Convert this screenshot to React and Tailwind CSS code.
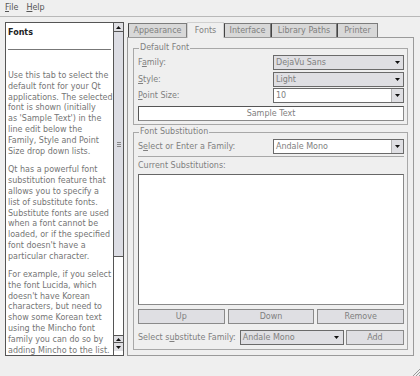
import React from 'react';

const para1 = [
  'Use this tab to select the',
  'default font for your Qt',
  'applications. The selected',
  'font is shown (initially',
  "as 'Sample Text') in the",
  'line edit below the',
  'Family, Style and Point',
  'Size drop down lists.',
];
const para2 = [
  'Qt has a powerful font',
  'substitution feature that',
  'allows you to specify a',
  'list of substitute fonts.',
  'Substitute fonts are used',
  'when a font cannot be',
  'loaded, or if the specified',
  "font doesn't have a",
  'particular character.',
];
const para3 = [
  'For example, if you select',
  'the font Lucida, which',
  "doesn't have Korean",
  'characters, but need to',
  'show some Korean text',
  'using the Mincho font',
  'family you can do so by',
  'adding Mincho to the list.',
];

function Para({ lines, className }) {
  return (
    <div className={className}>
      {lines.map((l, i) => (
        <div key={i} className="leading-[10.8px] whitespace-nowrap">{l}</div>
      ))}
    </div>
  );
}

function Arrow() {
  return (
    <svg width="5" height="3" viewBox="0 0 5 3" className="block">
      <path d="M0 0h5L2.5 3z" fill="#111" />
    </svg>
  );
}

function UpArrow() {
  return (
    <svg width="5" height="3" viewBox="0 0 5 3" className="block">
      <path d="M0 3h5L2.5 0z" fill="#111" />
    </svg>
  );
}

function Combo({ value, editable, className = '' }) {
  return (
    <div
      className={`h-[15px] flex items-center border border-[#6a6a6a] ${
        editable ? 'bg-white' : 'bg-[#dfdfe3]'
      } ${className}`}
    >
      <span className="flex-1 pl-[2px] leading-[13px] text-[#808080] truncate">{value}</span>
      <span
        className={`w-[12px] h-full flex items-center justify-center ${
          editable ? 'bg-[#dfdfe3] border-l border-[#b0b0b0]' : ''
        }`}
      >
        <Arrow />
      </span>
    </div>
  );
}

function Button({ children, className = '' }) {
  return (
    <div
      className={`h-[15px] flex items-center justify-center border border-[#8a8a8a] bg-[#dfdfe3] text-[#808080] leading-[13px] ${className}`}
    >
      {children}
    </div>
  );
}

function Tab({ label, w, selected }) {
  if (selected) {
    return (
      <div
        className={`${w} h-[16px] -mb-px relative z-10 flex items-center justify-center bg-[#efefef] border-t border-x border-[#d0d0d0] text-[#808080]`}
      >
        {label}
      </div>
    );
  }
  return (
    <div
      className={`${w} h-[14px] flex items-center justify-center bg-[#d8d8d8] border-t border-x border-[#7c7c7c] border-l-[#444] text-[#808080]`}
    >
      {label}
    </div>
  );
}

export default function App() {
  return (
    <div className="w-[420px] h-[376px] bg-[#efefef] flex flex-col overflow-hidden font-['DejaVu_Sans',sans-serif] text-[8px] text-[#757575] relative">
      {/* menu bar */}
      <div className="h-[17px] flex items-center gap-[8px] px-[5px] border-b border-[#b8b8b8] text-[#555] shrink-0">
        <span><u>F</u>ile</span>
        <span><u>H</u>elp</span>
      </div>

      <div className="flex pt-[5px] pl-[5px]">
        {/* left help text */}
        <div className="w-[119px] h-[334px] flex border border-[#555] bg-white">
          <div className="flex-1 pl-[2px] pt-[4px] overflow-hidden">
            <div className="font-bold text-[#222] leading-[11px]">Fonts</div>
            <div className="mt-[11px] mr-[2px] h-px bg-[#777]" />
            <Para lines={para1} className="mt-[21px]" />
            <Para lines={para2} className="mt-[8px]" />
            <Para lines={para3} className="mt-[7.5px]" />
          </div>
          <div className="w-[10px] flex flex-col border-l border-[#555]">
            <div className="h-[9px] flex items-center justify-center bg-[#dfdfe3] border-b border-[#555]">
              <UpArrow />
            </div>
            <div className="h-[225px] bg-[#dcdde4] border-b border-[#555] flex items-center justify-center">
              <div className="flex flex-col gap-[1px]">
                <div className="w-[4px] h-px bg-[#888]" />
                <div className="w-[4px] h-px bg-[#888]" />
                <div className="w-[4px] h-px bg-[#888]" />
              </div>
            </div>
            <div className="flex-1 bg-white" />
            <div className="h-[8px] flex items-center justify-center bg-[#dfdfe3] border-y border-[#555]">
              <UpArrow />
            </div>
            <div className="h-[8px] flex items-center justify-center bg-[#dfdfe3]">
              <Arrow />
            </div>
            <div className="h-[4px] bg-white" />
          </div>
        </div>

        {/* tab widget */}
        <div className="ml-[3px] w-[287px] flex flex-col">
          <div className="h-[15px] flex items-end pl-[1px]">
            <Tab label="Appearance" w="w-[59px]" />
            <Tab label="Fonts" w="w-[37px]" selected />
            <Tab label="Interface" w="w-[47px]" />
            <Tab label="Library Paths" w="w-[66px]" />
            <Tab label="Printer" w="w-[41px]" />
          </div>
          <div className="h-[319px] border border-[#9a9a9a] flex flex-col px-[5px] pt-[5px] pb-[5px] text-[#808080]">
            <fieldset className="border border-[#a8a8a8] px-[4px] pr-[3px] pb-[3px]">
              <legend className="px-[1px] ml-[1px] leading-[10px]">Default Font</legend>
              <div className="mt-[2px] flex items-center justify-between">
                <span>F<u>a</u>mily:</span>
                <Combo value="DejaVu Sans" className="w-[131px]" />
              </div>
              <div className="mt-[2px] flex items-center justify-between">
                <span><u>S</u>tyle:</span>
                <Combo value="Light" className="w-[131px]" />
              </div>
              <div className="mt-[1px] flex items-center justify-between">
                <span><u>P</u>oint Size:</span>
                <Combo value="10" editable className="w-[131px]" />
              </div>
              <div className="mt-[3px] h-[15px] border border-[#8a8a8a] border-t-[#555] border-l-[#555] bg-white flex items-center justify-center">
                Sample Text
              </div>
            </fieldset>

            <fieldset className="mt-[2px] h-[223px] border border-[#a8a8a8] px-[4px] pr-[3px] pb-[4px]">
              <legend className="px-[1px] ml-[1px] leading-[10px]">Font Substitution</legend>
              <div className="mt-[2px] flex items-center justify-between">
                <span>S<u>e</u>lect or Enter a Family:</span>
                <Combo value="Andale Mono" editable className="w-[131px]" />
              </div>
              <div className="mt-[2px] h-px bg-[#a8a8a8]" />
              <div className="mt-[4px] leading-[10px]">Current Substitutions:</div>
              <div className="mt-[3px] h-[131px] border border-[#8a8a8a] border-t-[#666] border-l-[#666] bg-white" />
              <div className="mt-[4px] flex gap-[3px]">
                <Button className="flex-1">Up</Button>
                <Button className="flex-1">Down</Button>
                <Button className="flex-1">Remove</Button>
              </div>
              <div className="mt-[6px] flex items-center">
                <span className="whitespace-nowrap">Select s<u>u</u>bstitute Family:</span>
                <Combo value="Andale Mono" className="ml-[4px] w-[104px]" />
                <Button className="ml-[2px] flex-1">Add</Button>
              </div>
            </fieldset>
          </div>
        </div>
      </div>

      {/* size grip */}
      <svg width="8" height="8" viewBox="0 0 8 8" className="absolute right-0 bottom-0">
        <path d="M8 1L1 8M8 4L4 8M8 7L7 8" stroke="#999" strokeWidth="1" />
      </svg>
    </div>
  );
}
